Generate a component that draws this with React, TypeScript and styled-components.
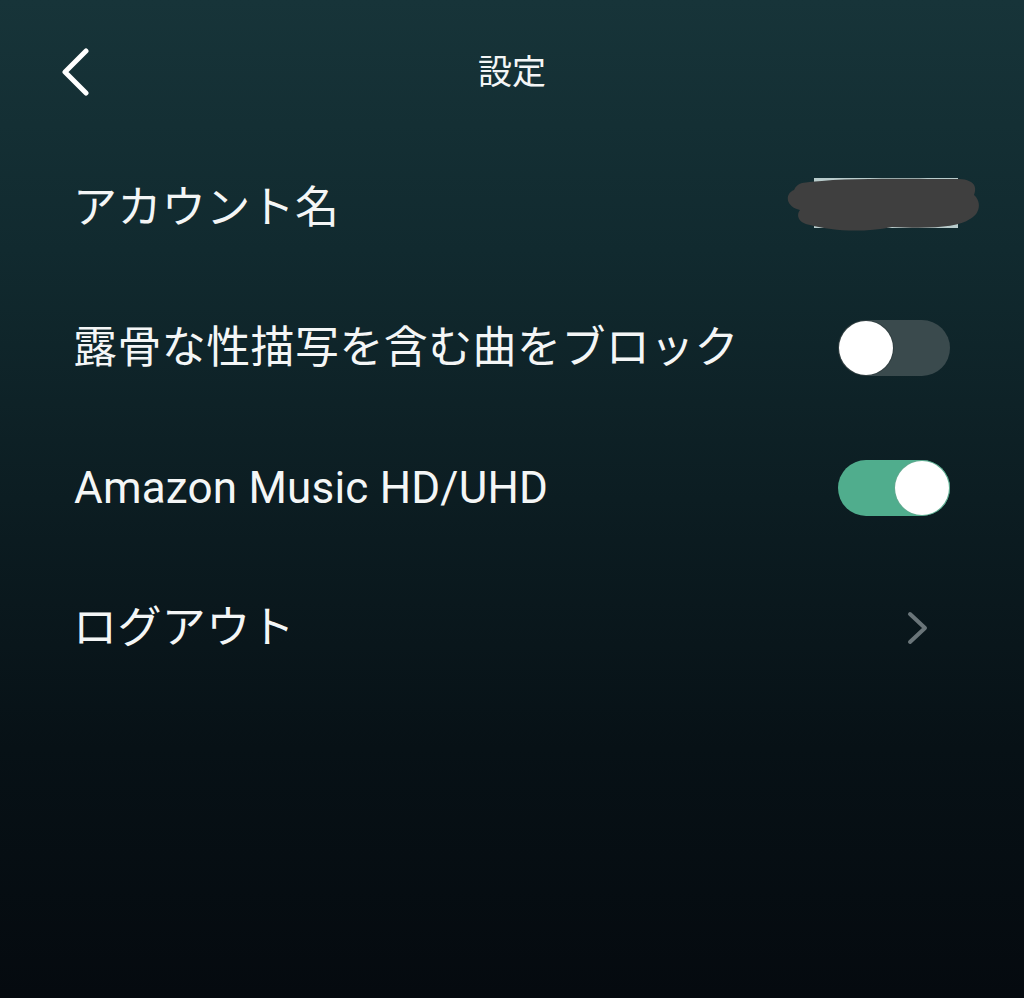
import React, { useState } from 'react';
import styled, { createGlobalStyle } from 'styled-components';

const GlobalStyle = createGlobalStyle`
  html, body {
    margin: 0;
    padding: 0;
    background: #050b10;
  }
  body {
    font-family: Roboto, "Noto Sans CJK JP", "Noto Sans", sans-serif;
    -webkit-font-smoothing: antialiased;
  }
`;

const Screen = styled.div`
  width: 1024px;
  height: 998px;
  background: linear-gradient(180deg, #173439 0%, #112a2f 25%, #0c1d22 50%, #071116 75%, #050a0f 100%);
  color: #f4f6f6;
  overflow: hidden;
`;

const Header = styled.header`
  display: grid;
  grid-template-columns: 1fr auto 1fr;
  align-items: center;
  height: 48px;
  padding: 48px 0 0 0;
`;

const BackButton = styled.button`
  justify-self: start;
  display: flex;
  align-items: center;
  margin-left: 60px;
  padding: 0;
  border: none;
  background: none;
  cursor: pointer;
`;

const Title = styled.h1`
  margin: 0;
  font-size: 34px;
  font-weight: 400;
  line-height: 48px;
  color: #f4f6f6;
`;

const List = styled.ul`
  list-style: none;
  margin: 42px 0 0 0;
  padding: 0;
`;

const Row = styled.li<{ clickable?: boolean }>`
  display: flex;
  align-items: center;
  justify-content: space-between;
  height: 140px;
  padding: 0 74px 0 76px;
  cursor: ${({ clickable }) => (clickable ? 'pointer' : 'default')};
`;

const Label = styled.span<{ latin?: boolean }>`
  font-size: 44px;
  font-weight: 400;
  line-height: 1;
  margin-left: ${({ latin }) => (latin ? '-2px' : '-3px')};
  letter-spacing: ${({ latin }) => (latin ? '0.2px' : '0.4px')};
`;

const Redacted = styled.svg`
  margin-right: -32px;
  margin-top: -4px;
`;

const Track = styled.button<{ on: boolean }>`
  position: relative;
  width: 112px;
  height: 56px;
  border-radius: 28px;
  border: none;
  padding: 0;
  background: ${({ on }) => (on ? '#50ad8d' : '#3a4a4d')};
  cursor: pointer;
`;

const Knob = styled.span<{ on: boolean }>`
  position: absolute;
  top: 1px;
  left: ${({ on }) => (on ? '57px' : '1px')};
  width: 54px;
  height: 54px;
  border-radius: 50%;
  background: #ffffff;
  box-shadow: ${({ on }) => (on ? '0 0 0 1px #5fa98f' : '0 0 0 1px rgba(0,0,0,0.15)')};
`;

const Chevron = styled.svg`
  margin-right: 20px;
`;

const Toggle = ({ initial }: { initial: boolean }) => {
  const [on, setOn] = useState(initial);
  return (
    <Track on={on} onClick={() => setOn(!on)} aria-pressed={on}>
      <Knob on={on} />
    </Track>
  );
};

export default function App() {
  return (
    <>
      <GlobalStyle />
      <Screen>
        <Header>
          <BackButton aria-label="戻る">
            <svg width="32" height="48" viewBox="0 0 32 48">
              <polyline
                points="26,3 5,24 26,45"
                fill="none"
                stroke="#ffffff"
                strokeWidth="5"
                strokeLinecap="round"
                strokeLinejoin="round"
              />
            </svg>
          </BackButton>
          <Title>設定</Title>
          <div />
        </Header>

        <List>
          <Row>
            <Label>アカウント名</Label>
            <Redacted width="200" height="60" viewBox="0 0 200 60">
              <rect x="32" y="2" width="144" height="50" fill="#b9cccc" />
              <path
                d="M20 7 C60 1 130 3 175 3 C190 3 196 9 192 19 C200 26 198 38 188 43 C176 51 150 53 110 51 C80 57 50 55 28 49 C16 47 14 39 18 34 C4 31 2 18 12 14 C14 10 16 8 20 7 Z"
                fill="#3f3f3f"
              />
            </Redacted>
          </Row>
          <Row>
            <Label>露骨な性描写を含む曲をブロック</Label>
            <Toggle initial={false} />
          </Row>
          <Row>
            <Label latin>Amazon Music HD/UHD</Label>
            <Toggle initial={true} />
          </Row>
          <Row clickable>
            <Label>ログアウト</Label>
            <Chevron width="24" height="34" viewBox="0 0 24 34">
              <polyline
                points="4,3 19,17 4,31"
                fill="none"
                stroke="#6a7579"
                strokeWidth="4"
                strokeLinecap="round"
                strokeLinejoin="round"
              />
            </Chevron>
          </Row>
        </List>
      </Screen>
    </>
  );
}
